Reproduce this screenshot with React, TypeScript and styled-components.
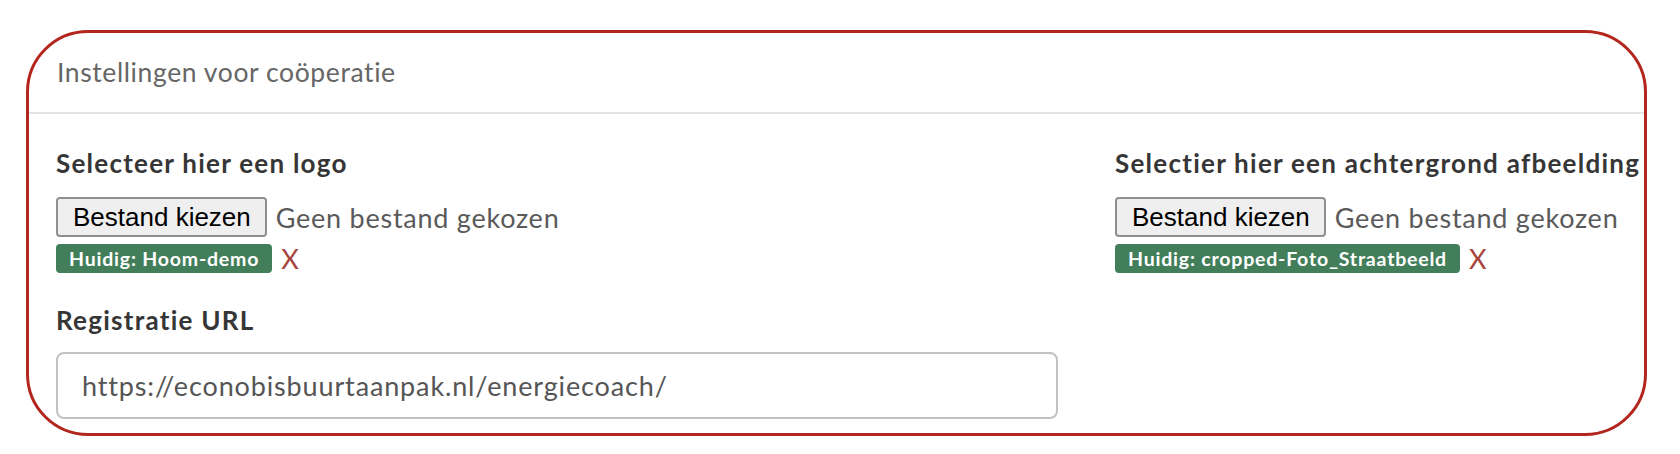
import React from "react";
import styled, { createGlobalStyle } from "styled-components";

const GlobalStyle = createGlobalStyle`
  html, body { margin: 0; padding: 0; background: #ffffff; }
  body { font-family: "Lato", "Open Sans", sans-serif; }
  * { box-sizing: border-box; }
`;

const Page = styled.div`
  width: 1680px;
  height: 454px;
  padding: 30px 0 0 26px;
`;

const Frame = styled.div`
  width: 1621px;
  height: 406px;
  border: 3px solid #b3261e;
  border-radius: 62px;
  overflow: hidden;
  background: #ffffff;
`;

const Panel = styled.section`
  width: 2200px;
`;

const PanelHeading = styled.header`
  height: 81px;
  border-bottom: 2px solid #e4e4e4;
  display: flex;
  align-items: center;
  padding-left: 28px;
  font-family: "Lato", sans-serif;
  font-size: 26.5px;
  letter-spacing: 0.6px;
  line-height: 31px;
  color: #666666;
`;

const PanelBody = styled.div`
  padding: 34px 0 0 27px;
  display: flex;
  flex-direction: column;
`;

const Row = styled.div`
  display: grid;
  grid-template-columns: 1002px 1002px;
  column-gap: 57px;
`;

const Col = styled.div`
  display: flex;
  flex-direction: column;
`;

const Label = styled.label`
  font-family: "Lato", sans-serif;
  font-weight: 700;
  font-size: 26px;
  letter-spacing: 1.25px;
  line-height: 30px;
  color: #363636;
  white-space: nowrap;
`;

const FileRow = styled.div`
  margin-top: 19px;
  display: flex;
  align-items: center;
  gap: 9px;
  height: 40px;
`;

const FileButton = styled.button`
  height: 40px;
  padding: 0 14px 0 15px;
  border: 2px solid #8f8f8f;
  border-radius: 4px;
  background: #efefef;
  color: #000000;
  font-family: "Liberation Sans", Arial, sans-serif;
  font-size: 26px;
  line-height: 36px;
`;

const FileStatus = styled.span`
  font-family: "Lato", sans-serif;
  font-size: 27px;
  letter-spacing: 0.75px;
  color: #5a5a5a;
  white-space: nowrap;
`;

const CurrentRow = styled.div`
  margin-top: 7px;
  display: flex;
  align-items: center;
  gap: 9px;
  height: 29px;
`;

const Badge = styled.span`
  height: 29px;
  display: inline-flex;
  align-items: center;
  padding: 0 13px;
  border-radius: 4px;
  background: #437e5a;
  color: #ffffff;
  font-family: "Lato", sans-serif;
  font-weight: 700;
  font-size: 19.5px;
  letter-spacing: 0.8px;
  white-space: nowrap;
`;

const RemoveMark = styled.span`
  font-family: "Lato", sans-serif;
  font-size: 27px;
  line-height: 29px;
  color: #a8443d;
`;

const Field = styled.div`
  margin-top: 32px;
  display: flex;
  flex-direction: column;
`;

const UrlInput = styled.input`
  margin-top: 17px;
  width: 1002px;
  height: 67px;
  padding: 0 24px;
  border: 2px solid #c2c2c2;
  border-radius: 8px;
  font-family: "Lato", sans-serif;
  font-size: 27px;
  letter-spacing: 0.86px;
  color: #555555;
  outline: none;
`;

const FilePicker: React.FC<{ label: string; current: string }> = ({ label, current }) => (
  <Col>
    <Label>{label}</Label>
    <FileRow>
      <FileButton type="button">Bestand kiezen</FileButton>
      <FileStatus>Geen bestand gekozen</FileStatus>
    </FileRow>
    <CurrentRow>
      <Badge>Huidig: {current}</Badge>
      <RemoveMark>X</RemoveMark>
    </CurrentRow>
  </Col>
);

export default function App() {
  return (
    <>
      <GlobalStyle />
      <Page>
        <Frame>
          <Panel>
            <PanelHeading>Instellingen voor coöperatie</PanelHeading>
            <PanelBody>
              <Row>
                <FilePicker label="Selecteer hier een logo" current="Hoom-demo" />
                <FilePicker
                  label="Selectier hier een achtergrond afbeelding"
                  current="cropped-Foto_Straatbeeld"
                />
              </Row>
              <Field>
                <Label>Registratie URL</Label>
                <UrlInput
                  type="text"
                  defaultValue="https://econobisbuurtaanpak.nl/energiecoach/"
                />
              </Field>
            </PanelBody>
          </Panel>
        </Frame>
      </Page>
    </>
  );
}
